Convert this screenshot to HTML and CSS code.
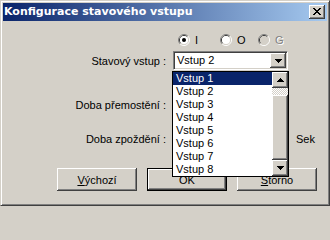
FILE: index.html
```html
<!DOCTYPE html>
<html lang="cs">
<head>
<meta charset="utf-8">
<title>Konfigurace stavového vstupu</title>
<link rel="stylesheet" href="styles.css">
</head>
<body>
<div class="window">
  <div class="titlebar">
    <span class="title">Konfigurace stavového vstupu</span>
    <span class="close-btn">
      <svg width="8" height="7" viewBox="0 0 8 7" shape-rendering="crispEdges"><path d="M0 0h2v1H0zM6 0h2v1H6zM1 1h2v1H1zM5 1h2v1H5zM2 2h4v1H2zM3 3h2v1H3zM2 4h4v1H2zM1 5h2v1H1zM5 5h2v1H5zM0 6h2v1H0zM6 6h2v1H6z" fill="#000"/></svg>
    </span>
  </div>
  <div class="content">
    <div class="row row-radios">
      <div class="label"></div>
      <div class="radios">
        <span class="radio radio-i">
          <svg class="radio-icon" width="12" height="12" viewBox="0 0 12 12"><path d="M2.11 9.89A5.5 5.5 0 0 1 9.89 2.11" fill="none" stroke="#808080"/><path d="M9.89 2.11A5.5 5.5 0 0 1 2.11 9.89" fill="none" stroke="#fff"/><path d="M2.82 9.18A4.5 4.5 0 0 1 9.18 2.82" fill="none" stroke="#404040"/><path d="M9.18 2.82A4.5 4.5 0 0 1 2.82 9.18" fill="none" stroke="#d4d0c8"/><circle cx="6" cy="6" r="4" fill="#fff"/><circle cx="6" cy="6" r="2" fill="#000"/></svg>
          <span>I</span>
        </span>
        <span class="radio radio-o">
          <svg class="radio-icon" width="12" height="12" viewBox="0 0 12 12"><path d="M2.11 9.89A5.5 5.5 0 0 1 9.89 2.11" fill="none" stroke="#808080"/><path d="M9.89 2.11A5.5 5.5 0 0 1 2.11 9.89" fill="none" stroke="#fff"/><path d="M2.82 9.18A4.5 4.5 0 0 1 9.18 2.82" fill="none" stroke="#404040"/><path d="M9.18 2.82A4.5 4.5 0 0 1 2.82 9.18" fill="none" stroke="#d4d0c8"/><circle cx="6" cy="6" r="4" fill="#fff"/></svg>
          <span>O</span>
        </span>
        <span class="radio radio-g disabled">
          <svg class="radio-icon" width="12" height="12" viewBox="0 0 12 12"><path d="M2.11 9.89A5.5 5.5 0 0 1 9.89 2.11" fill="none" stroke="#808080"/><path d="M9.89 2.11A5.5 5.5 0 0 1 2.11 9.89" fill="none" stroke="#fff"/><path d="M2.82 9.18A4.5 4.5 0 0 1 9.18 2.82" fill="none" stroke="#404040"/><path d="M9.18 2.82A4.5 4.5 0 0 1 2.82 9.18" fill="none" stroke="#d4d0c8"/><circle cx="6" cy="6" r="4" fill="#d4d0c8"/></svg>
          <span>G</span>
        </span>
      </div>
    </div>
    <div class="row row-combo">
      <div class="label">Stavový vstup :</div>
      <div class="combo">
        <span class="combo-value">Vstup 2</span>
        <span class="arrow-btn">
          <svg width="7" height="4" viewBox="0 0 7 4" shape-rendering="crispEdges"><path d="M0 0h7v1H0zM1 1h5v1H1zM2 2h3v1H2zM3 3h1v1H3z" fill="#000"/></svg>
        </span>
      </div>
    </div>
    <div class="row row-bridge">
      <div class="label">Doba přemostění :</div>
      <div class="field"></div>
    </div>
    <div class="row row-delay">
      <div class="label">Doba zpoždění :</div>
      <div class="field"></div>
      <div class="unit">Sek</div>
    </div>
    <div class="buttons">
      <button class="btn"><u>V</u>ýchozí</button>
      <button class="btn btn-default">OK</button>
      <button class="btn"><u>S</u>torno</button>
    </div>
    <div class="dropdown">
      <ul class="options">
        <li class="selected">Vstup 1</li>
        <li>Vstup 2</li>
        <li>Vstup 3</li>
        <li>Vstup 4</li>
        <li>Vstup 5</li>
        <li>Vstup 6</li>
        <li>Vstup 7</li>
        <li>Vstup 8</li>
      </ul>
      <div class="scrollbar">
        <span class="arrow-btn scroll-btn">
          <svg width="7" height="4" viewBox="0 0 7 4" shape-rendering="crispEdges"><path d="M3 0h1v1H3zM2 1h3v1H2zM1 2h5v1H1zM0 3h7v1H0z" fill="#000"/></svg>
        </span>
        <div class="track"><div class="thumb"></div></div>
        <span class="arrow-btn scroll-btn">
          <svg width="7" height="4" viewBox="0 0 7 4" shape-rendering="crispEdges"><path d="M0 0h7v1H0zM1 1h5v1H1zM2 2h3v1H2zM3 3h1v1H3z" fill="#000"/></svg>
        </span>
      </div>
    </div>
  </div>
</div>
</body>
</html>
```
FILE: styles.css
```css
* {
  box-sizing: border-box;
}

html,
body {
  background: #d4d0c8;
}

body {
  margin: 0;
  font-family: "Liberation Sans", Arial, sans-serif;
  font-size: 11px;
  color: #000;
}

.window {
  width: 330px;
  height: 206px;
  background: #d4d0c8;
  border: 1px solid;
  border-color: #d4d0c8 #404040 #404040 #d4d0c8;
  box-shadow: inset 1px 1px #fff, inset -1px -1px #808080;
  padding: 2px;
  display: flex;
  flex-direction: column;
}

.titlebar {
  height: 18px;
  flex: none;
  display: flex;
  align-items: center;
  justify-content: space-between;
  padding: 0 2px 0 1px;
  background: linear-gradient(to right, #0a246a, #a6caf0);
}

.title {
  color: #fff;
  font-family: "DejaVu Sans", sans-serif;
  font-weight: bold;
  font-size: 11px;
  line-height: 18px;
  white-space: nowrap;
}

.close-btn {
  width: 16px;
  height: 14px;
  background: #d4d0c8;
  box-shadow: inset -1px -1px #404040, inset 1px 1px #fff, inset -2px -2px #808080;
  display: flex;
  align-items: center;
  justify-content: center;
  padding-bottom: 1px;
}

.close-btn svg {
  display: block;
}

.content {
  flex: 1;
  position: relative;
  display: flex;
  flex-direction: column;
}

.row {
  display: grid;
  grid-template-columns: 163px 115px auto;
  column-gap: 7px;
  flex: none;
}

.label {
  text-align: right;
  align-self: center;
  white-space: nowrap;
}

.row-radios {
  margin-top: 13px;
  height: 12px;
}

.radios {
  display: flex;
  align-items: center;
  padding-left: 5px;
  height: 12px;
}

.radio {
  display: flex;
  align-items: center;
  gap: 5px;
  line-height: 12px;
}

.radio-i {
  width: 42px;
}

.radio-o {
  width: 38px;
}

.radio-icon {
  display: block;
  flex: none;
}

.disabled span {
  color: #808080;
  text-shadow: 1px 1px #fff;
}

.row-combo {
  margin-top: 5px;
  height: 19px;
}

.combo {
  height: 19px;
  background: #fff;
  border: 1px solid;
  border-color: #808080 #fff #fff #808080;
  box-shadow: inset 1px 1px #404040, inset -1px -1px #d4d0c8;
  padding: 1px;
  display: flex;
  align-items: stretch;
}

.combo-value {
  flex: 1;
  padding-left: 2px;
  line-height: 15px;
}

.arrow-btn {
  width: 16px;
  background: #d4d0c8;
  box-shadow: inset -1px -1px #404040, inset 1px 1px #fff, inset -2px -2px #808080;
  display: flex;
  align-items: center;
  justify-content: center;
}

.arrow-btn svg {
  display: block;
}

.row-bridge {
  margin-top: 26px;
  height: 18px;
}

.row-delay {
  margin-top: 16px;
  height: 18px;
}

.field {
  height: 18px;
  background: #fff;
  border: 1px solid;
  border-color: #808080 #fff #fff #808080;
}

.unit {
  align-self: center;
  margin-left: 1px;
}

.buttons {
  margin-top: 20px;
  height: 23px;
  display: flex;
  gap: 10px;
  padding-left: 54px;
  flex: none;
}

.btn {
  width: 80px;
  height: 23px;
  margin: 0;
  padding: 0;
  border: none;
  background: #d4d0c8;
  font-family: "Liberation Sans", Arial, sans-serif;
  font-size: 11px;
  color: #000;
  box-shadow: inset -1px -1px #404040, inset 1px 1px #fff, inset -2px -2px #808080, inset 2px 2px #d4d0c8;
}

.btn-default {
  border: 1px solid #000;
  box-shadow: inset -1px -1px #404040, inset 1px 1px #fff, inset -2px -2px #808080;
}

.dropdown {
  position: absolute;
  left: 169px;
  top: 50px;
  width: 117px;
  height: 106px;
  border: 1px solid #000;
  background: #fff;
  display: flex;
}

.options {
  list-style: none;
  margin: 0;
  padding: 0;
  width: 99px;
}

.options li {
  height: 13px;
  line-height: 13px;
  padding-left: 3px;
}

.options li.selected {
  background: #0a246a;
  color: #fff;
}

.scrollbar {
  width: 16px;
  display: flex;
  flex-direction: column;
}

.scroll-btn {
  height: 16px;
  flex: none;
}

.track {
  flex: 1;
  background: repeating-conic-gradient(#d4d0c8 0 25%, #fff 0 50%) 0 0 / 2px 2px;
  padding-top: 7px;
}

.thumb {
  height: 65px;
  background: #d4d0c8;
  box-shadow: inset -1px -1px #404040, inset 1px 1px #fff, inset -2px -2px #808080;
}
```
